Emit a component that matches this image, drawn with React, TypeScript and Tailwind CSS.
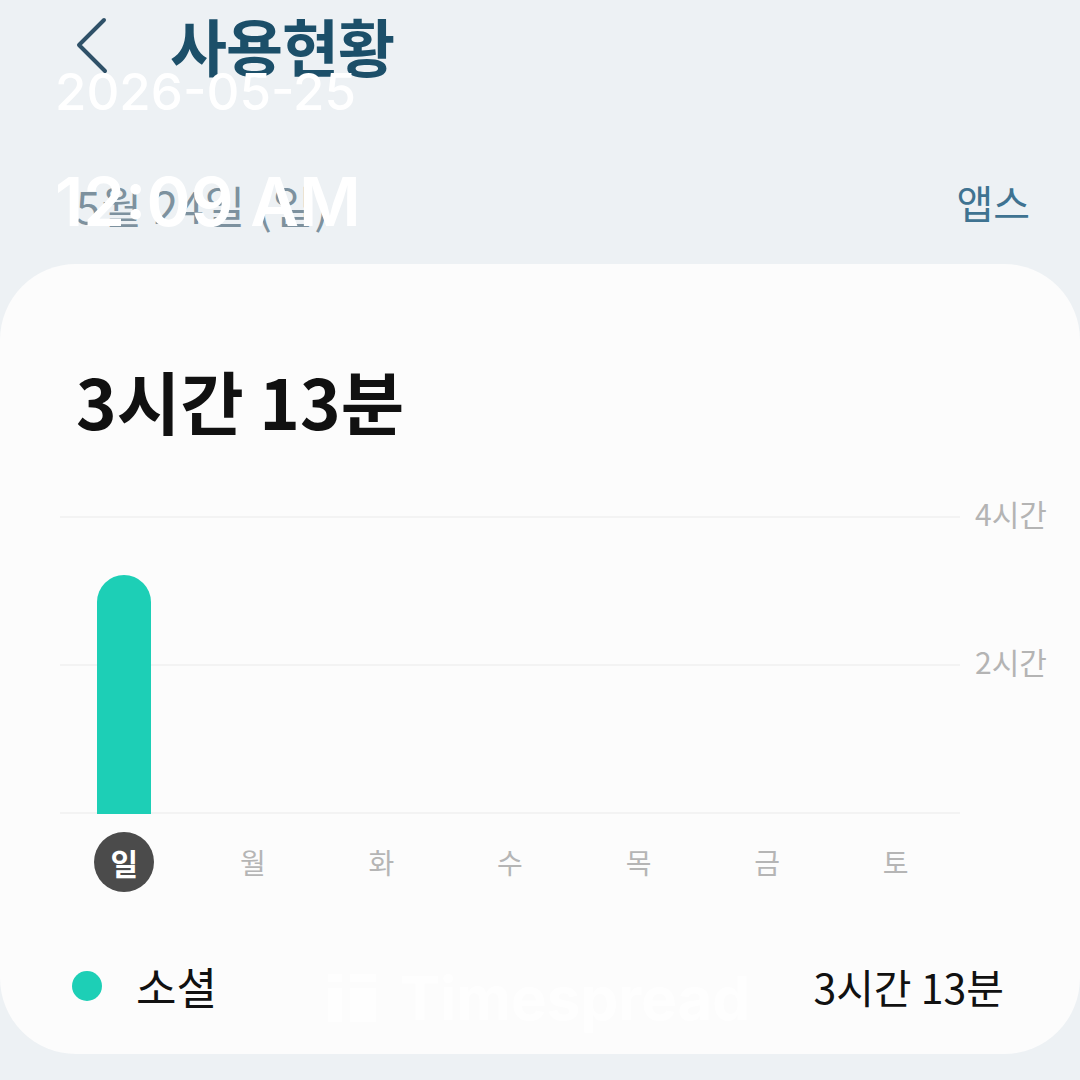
const days = ['일', '월', '화', '수', '목', '금', '토'];

const fontStack = "font-['Noto_Sans_CJK_KR',sans-serif]";

const App = () => {
    return (
        <div className={`relative w-[1080px] h-[1080px] overflow-hidden bg-[#edf1f4] ${fontStack}`}>
            {/* Header */}
            <div className="flex items-center h-[96px] pl-[76px]">
                <svg width="34" height="58" viewBox="0 0 34 58" fill="none" className="-mt-[4px]" stroke="#2f5168" strokeWidth="4" strokeLinecap="round" strokeLinejoin="round">
                    <path d="M28 3 L3 28 L29 54" />
                </svg>
                <h1 className="ml-[60px] -mt-[6px] text-[62px] leading-none font-bold tracking-[-1px] text-[#1c4f69]">사용현황</h1>
            </div>

            {/* Date row */}
            <div className="flex items-center justify-between h-[168px] pt-[52px] pl-[76px] pr-[50px]">
                <span className="text-[44px] leading-none tracking-[1px] text-[#7d919e] mt-[-2px]">5월 24일 (일)</span>
                <span className="text-[40px] leading-none text-[#3f7391] -mt-[8px]">앱스</span>
            </div>

            {/* Card */}
            <div className="h-[790px] rounded-[76px] bg-[#fcfcfc] pt-[88px]">
                <div className="pl-[76px] text-[69px] leading-[96px] font-bold text-[#111111]">3시간 13분</div>

                {/* Chart */}
                <div className="relative mt-[68px] ml-[60px] w-[900px] h-[298px] flex flex-col justify-between">
                    <div className="relative h-[2px] bg-[#f3f3f3]">
                        <span className="absolute left-[915px] -top-[21px] text-[30px] leading-[36px] whitespace-nowrap text-[#b4b4b4]">4시간</span>
                    </div>
                    <div className="relative h-[2px] bg-[#f3f3f3]">
                        <span className="absolute left-[915px] -top-[21px] text-[30px] leading-[36px] whitespace-nowrap text-[#b4b4b4]">2시간</span>
                    </div>
                    <div className="h-[2px] bg-[#f3f3f3]" />
                    <div className="absolute left-[37px] bottom-[0px] w-[54px] h-[239px] rounded-t-[27px] bg-[#1dcfb6]" />
                </div>

                {/* Days */}
                <div className="grid grid-cols-7 ml-[60px] w-[900px] mt-[18px]">
                    {days.map((day, index) => (
                        <div key={day} className="flex justify-center">
                            <span
                                className={
                                    index === 0
                                        ? 'flex items-center justify-center w-[60px] h-[60px] rounded-full bg-[#4b4b4b] text-[30px] font-bold text-white'
                                        : 'flex items-center justify-center w-[60px] h-[60px] text-[28px] text-[#b5b5b5]'
                                }
                            >
                                {day}
                            </span>
                        </div>
                    ))}
                </div>

                {/* Legend */}
                <div className="flex items-center justify-between mt-[62px] pl-[72px] pr-[76px]">
                    <div className="flex items-center">
                        <span className="w-[30px] h-[30px] rounded-full bg-[#1dcfb6]" />
                        <span className="ml-[34px] text-[44px] leading-[64px] text-[#111111]">소셜</span>
                    </div>
                    <span className="text-[41px] leading-[64px] text-[#111111]">3시간 13분</span>
                </div>
            </div>

            {/* Screenshot overlay */}
            <div className="absolute left-[55px] top-[60px] font-['Inter',sans-serif] text-white">
                <div className="text-[51px] leading-[64px] font-medium">2026-05-25</div>
                <div className="mt-[40px] text-[67px] leading-[76px] font-semibold">12:09 AM</div>
            </div>
            <div className="absolute left-[328px] top-[966px] flex items-center gap-[22px] font-['Inter',sans-serif] text-[60px] leading-[64px] font-bold text-white/70">
                <svg width="50" height="48" viewBox="0 0 50 48" fill="currentColor">
                    <rect x="0" y="0" width="14" height="8" />
                    <rect x="22" y="0" width="26" height="8" />
                    <rect x="0" y="14" width="14" height="34" />
                    <rect x="22" y="14" width="26" height="34" />
                </svg>
                <span>Timespread</span>
            </div>
        </div>
    );
};

export default App;
